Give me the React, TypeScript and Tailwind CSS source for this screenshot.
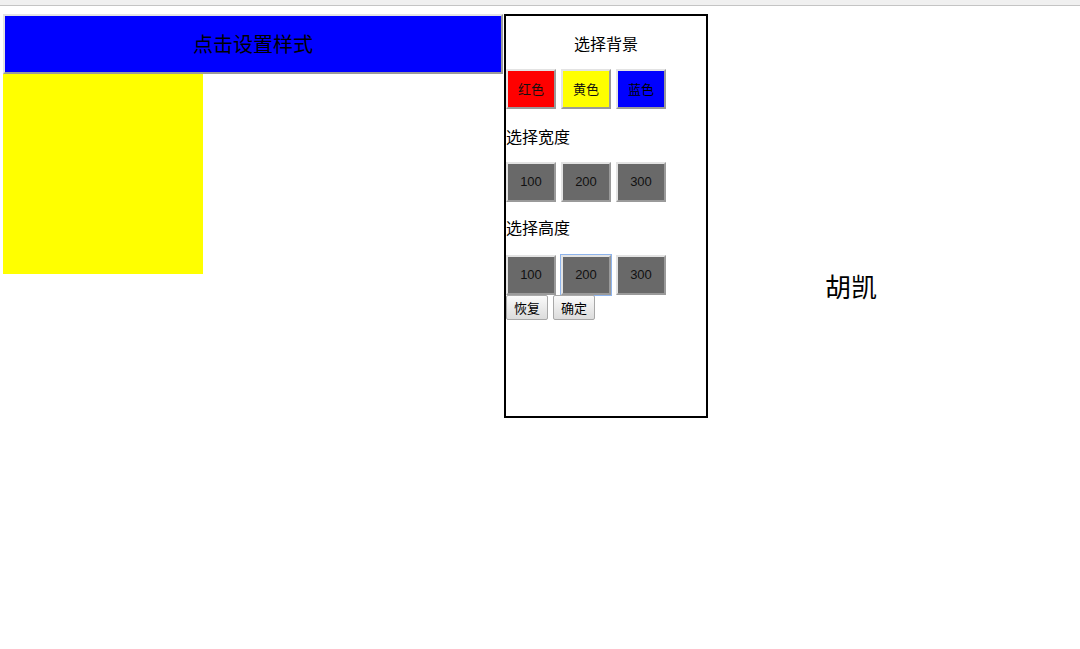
import { useState } from "react";

const cjk = "font-['SimSun','Noto_Sans_CJK_SC',sans-serif]";
const outset =
  "border-2 border-t-[#e3e3e3] border-l-[#e3e3e3] border-b-[#9a9a9a] border-r-[#9a9a9a]";

function OptionButton({
  label,
  className,
  focused,
}: {
  label: string;
  className: string;
  focused?: boolean;
}) {
  return (
    <button
      className={`h-10 w-[50px] ${outset} text-[13px] text-[#111] ${className} ${
        focused ? "outline outline-1 outline-[#8eb4ec]" : ""
      }`}
    >
      {label}
    </button>
  );
}

export default function App() {
  const [bg] = useState("#ffff00");

  return (
    <div className={`min-h-screen bg-white ${cjk}`}>
      <div className="h-[6px] border-b border-[#c4c4c4] bg-[#f0f0f0]" />
      <div className="flex items-start pl-[3px] pt-[8px]">
        <div className="flex w-[500px] flex-col">
          <button
            className={`h-[60px] w-[500px] ${outset} bg-[#0000ff] text-[20px] text-black`}
          >
            点击设置样式
          </button>
          <div className="h-[200px] w-[200px]" style={{ background: bg }} />
        </div>

        <div className="ml-px h-[404px] w-[204px] border-2 border-black">
          <p className="pt-[17px] text-center text-[16px] leading-5 text-black">选择背景</p>
          <div className="mt-[16px] flex gap-[5px]">
            <OptionButton label="红色" className="bg-[#ff0000]" />
            <OptionButton label="黄色" className="bg-[#ffff00]" />
            <OptionButton label="蓝色" className="bg-[#0000ff] text-black" />
          </div>

          <p className="mt-[17px] text-[16px] leading-5 text-black">选择宽度</p>
          <div className="mt-[16px] flex gap-[5px] font-['Liberation_Sans',sans-serif]">
            <OptionButton label="100" className="bg-[#696969]" />
            <OptionButton label="200" className="bg-[#696969]" />
            <OptionButton label="300" className="bg-[#696969]" />
          </div>

          <p className="mt-[15px] text-[16px] leading-5 text-black">选择高度</p>
          <div className="mt-[18px] flex gap-[5px] font-['Liberation_Sans',sans-serif]">
            <OptionButton label="100" className="bg-[#696969]" />
            <OptionButton label="200" className="bg-[#696969]" focused />
            <OptionButton label="300" className="bg-[#696969]" />
          </div>

          <div className="flex gap-[5px]">
            <button className="h-[25px] w-[42px] rounded-[2px] border border-[#a8a8a8] bg-gradient-to-b from-[#fafafa] to-[#dcdcdc] text-[13px] text-black">
              恢复
            </button>
            <button className="h-[25px] w-[42px] rounded-[2px] border border-[#a8a8a8] bg-gradient-to-b from-[#fafafa] to-[#dcdcdc] text-[13px] text-black">
              确定
            </button>
          </div>
        </div>

        <div className="ml-[117px] pt-[256px] text-[26px] leading-8 text-black">胡凯</div>
      </div>
    </div>
  );
}
